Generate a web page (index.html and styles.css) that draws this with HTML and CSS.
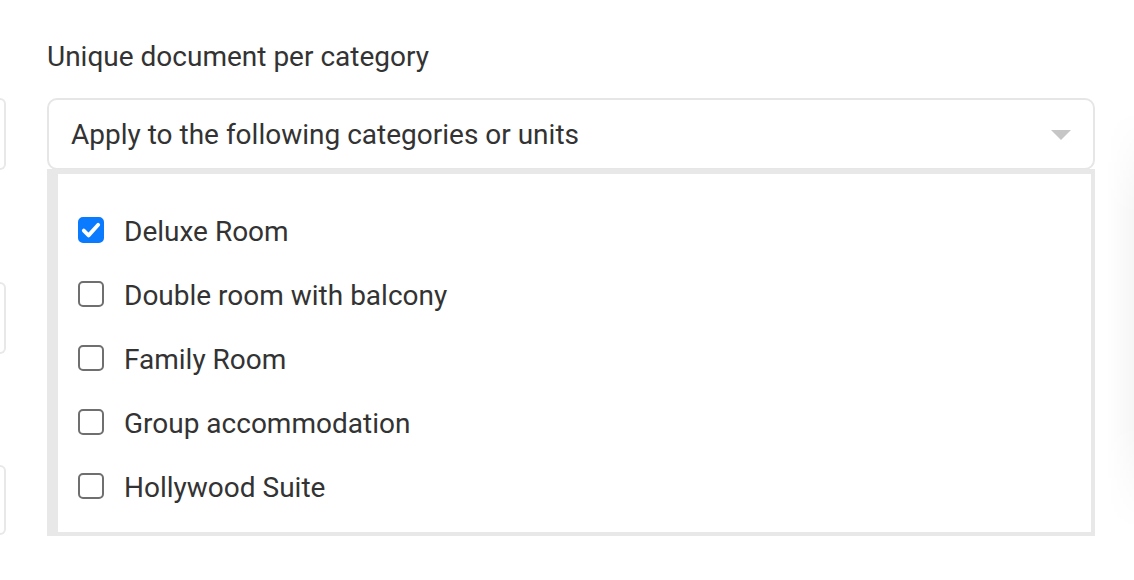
FILE: index.html
```html
<!DOCTYPE html>
<html>
<head>
<meta charset="utf-8">
<link rel="stylesheet" href="styles.css">
</head>
<body>
<div class="page">
  <div class="stub-col">
    <div class="stub stub-1"></div>
    <div class="stub stub-2"></div>
    <div class="stub stub-3"></div>
  </div>
  <div class="main">
    <div class="label">Unique document per category</div>
    <div class="select">
      <span class="select-text">Apply to the following categories or units</span>
      <span class="arrow"></span>
    </div>
    <div class="panel">
      <label class="item"><span class="cb checked"><svg viewBox="0 0 26 26" width="26" height="26"><path d="M5.8 13.6 L10.6 18.4 L20.2 7.8" fill="none" stroke="#fff" stroke-width="3.8" stroke-linecap="round" stroke-linejoin="round"/></svg></span><span class="item-text">Deluxe Room</span></label>
      <label class="item"><span class="cb"></span><span class="item-text">Double room with balcony</span></label>
      <label class="item"><span class="cb"></span><span class="item-text">Family Room</span></label>
      <label class="item"><span class="cb"></span><span class="item-text">Group accommodation</span></label>
      <label class="item"><span class="cb"></span><span class="item-text">Hollywood Suite</span></label>
    </div>
  </div>
  <div class="side-shadow"></div>
</div>
</body>
</html>
```

FILE: styles.css
```css
html, body {
  margin: 0;
  padding: 0;
  background: #ffffff;
  overflow: hidden;
}
body {
  font-family: Roboto, "Liberation Sans", Arial, sans-serif;
  color: #333333;
  width: 1134px;
  height: 580px;
}
.page {
  display: flex;
  align-items: flex-start;
  height: 580px;
}
.stub-col {
  width: 6px;
  flex: none;
  display: flex;
  flex-direction: column;
  padding-top: 98px;
}
.stub {
  width: 6px;
  box-sizing: border-box;
  border: 2px solid #e8e8e8;
  border-left: none;
  border-radius: 0 10px 10px 0;
  height: 72px;
}
.stub-2 { margin-top: 112px; }
.stub-3 { margin-top: 111px; height: 70px; }
.main {
  width: 1048px;
  flex: none;
  margin-left: 41px;
  padding-top: 39px;
}
.label {
  font-size: 28px;
  line-height: 36px;
  height: 36px;
  margin-bottom: 23px;
  color: #333;
}
.select {
  box-sizing: border-box;
  height: 72px;
  border: 2px solid #e6e6e6;
  border-radius: 10px;
  display: flex;
  align-items: center;
  justify-content: space-between;
  padding: 0 22px 0 22px;
}
.select-text {
  font-size: 28px;
  color: #333;
}
.arrow {
  width: 0;
  height: 0;
  border-left: 10px solid transparent;
  border-right: 10px solid transparent;
  border-top: 10px solid #c6c6c6;
  margin-top: 2px;
}
.panel {
  box-sizing: border-box;
  margin-top: -1px;
  border-style: solid;
  border-color: #e8e8e8;
  border-width: 5px 4px 4px 11px;
  padding: 24px 20px 14px 20px;
  display: flex;
  flex-direction: column;
  background: #fff;
}
.item {
  height: 64px;
  display: flex;
  align-items: center;
  gap: 20px;
}
.cb {
  width: 26px;
  height: 26px;
  box-sizing: border-box;
  border: 2px solid #6f6f6f;
  border-radius: 5px;
  flex: none;
  display: flex;
  align-items: center;
  justify-content: center;
}
.cb.checked {
  background: #0a7aff;
  border-color: #0a7aff;
}
.cb svg {
  display: block;
  margin: -2px;
}
.item-text {
  font-size: 28px;
  color: #333;
  margin-top: 2px;
}
.side-shadow {
  flex: none;
  width: 28px;
  height: 420px;
  margin-top: 110px;
  margin-left: 11px;
  background: linear-gradient(to right, rgba(0, 0, 0, 0), rgba(0, 0, 0, 0.035));
  -webkit-mask-image: linear-gradient(to bottom, transparent, #000 25%, #000 75%, transparent);
  mask-image: linear-gradient(to bottom, transparent, #000 25%, #000 75%, transparent);
}
```
